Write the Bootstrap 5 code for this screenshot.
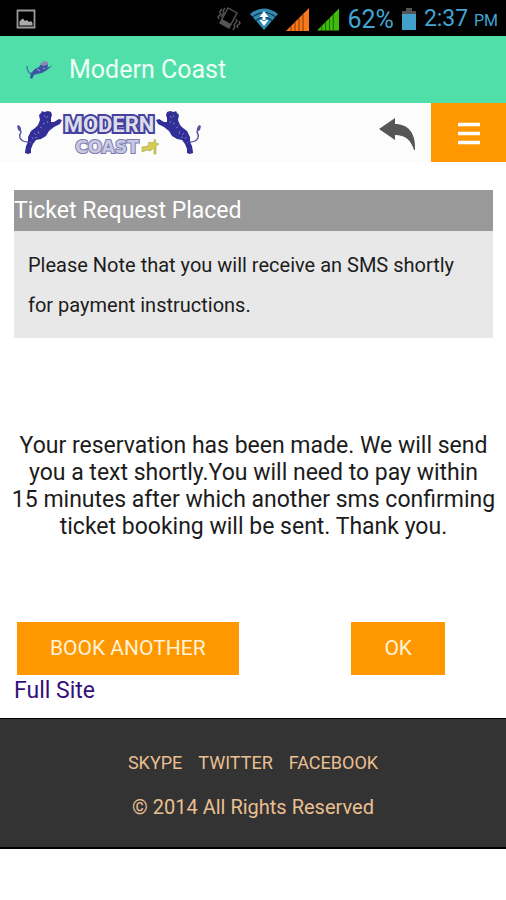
<!DOCTYPE html>
<html lang="en">
<head>
<meta charset="utf-8">
<meta name="viewport" content="width=device-width, initial-scale=1">
<title>Modern Coast</title>
<link href="https://cdn.jsdelivr.net/npm/bootstrap@5.3.0/dist/css/bootstrap.min.css" rel="stylesheet">
<style>
body { font-family: Roboto, "Liberation Sans", sans-serif; font-size: 23px; line-height: 27px; color: #1c1c1c; background: #fff; }
.status-bar { height: 36px; background: #000; color: #42a5d2; padding: 2px 8px 0 16px; }
.status-bar svg { flex: none; }
.status-level { font-size: 25px; }
.status-time { font-size: 23px; }
.status-period { font-size: 16px; }
.app-bar { height: 67px; background: #50dfa9; padding: 0 25px; gap: 14px; }
.app-title { font-size: 25px; line-height: 32px; color: #effff8; }
.site-header { height: 59px; background: #fcfcfc; }
.back-btn { padding: 0 13px; }
.menu-btn { width: 75px; background: #ff9800; }
.page-main { padding: 28px 13px 0 14px; }
.notice-title { font-size: 23px; line-height: 41px; color: #fff; background: #999; }
.notice-text { font-size: 20px; line-height: 40px; padding: 14px 14px 13px; background: #e8e8e8; }
.message { margin: 94px -8px 82px; }
.action-btn { font-size: 21px; line-height: 27px; padding: 13px 33px; background: #ff9800; color: #fff2d6; }
.action-btn:hover { background: #f08c00; color: #fff; }
.actions { padding: 0 48px 0 3px; }
.full-link { color: #35107c; line-height: 32px; }
.site-footer { margin-top: 11px; padding: 22px 0 18px; font-size: 20px; line-height: 44px; background: #333; border: solid #000; border-width: 1px 0 2px; color: #eabf91; }
.site-footer a { color: inherit; font-size: 18px; }
.logo-main { font: bold 22px Roboto, sans-serif; }
.logo-sub { font: bold 17px "DejaVu Sans", sans-serif; }
</style>
</head>
<body>
<div class="status-bar d-flex align-items-center">
  <svg class="me-auto" width="20" height="20" viewBox="0 0 20 20" aria-hidden="true"><path d="M1.5 1.5h17v17h-17z" fill="none" stroke="#999" stroke-width="1.8"/><path d="M3.5 16.5v-4l2-2 1.5-1 2 2.5 2-1 2 2 2-1 1.5 2v2.500z" fill="#aaa"/></svg>
  <svg width="26" height="26" viewBox="0 0 26 26" aria-hidden="true"><g fill="none" stroke="#555" stroke-width="1.400"><path d="M12 2l9 5-8 15-9-5z"/><path d="M6 3L3.500 6l1.500 2-3 3 1 2M9 2L7 5l1 2-3 4M20 13l1 2-3 4 1 2-2 3M23 15l1 2-3 3 1 2"/></g><path d="M4 17l9 5 2-4-9-5z" fill="#555"/></svg>
  <svg class="ms-2" width="28" height="22" viewBox="0 0 28 22" aria-hidden="true"><path d="M0 6Q14-5 28 6L14 22z" fill="#3189b4"/><path d="M2.500 9Q14 0 25.500 9M6 12.500Q14 6 22 12.500" fill="none" stroke="#083247" stroke-width="1.200"/><path d="M14 3l4.500 6h-9zM14 18l4.500-6h-9zM12.500 8h3v5h-3z" fill="#fff"/></svg>
  <svg class="ms-2" width="23" height="23" viewBox="0 0 23 23" aria-hidden="true"><path d="M0 23L23 0v23z" fill="#f7791b"/><path d="M5 18v5M9 14v9M13 10v13M17 6v17" stroke="#873800"/></svg>
  <svg class="ms-2 me-2" width="22" height="23" viewBox="0 0 23 23" aria-hidden="true"><path d="M0 23L23 0v23z" fill="#3fbd0c"/><path d="M5 18v5M9 14v9M13 10v13M17 6v17" stroke="#196000"/></svg>
  <span class="status-level">62%</span>
  <svg class="ms-2 me-2" width="14" height="22" viewBox="0 0 14 22" aria-hidden="true"><path d="M4 0h6v3h4v4H0V3h4z" fill="#555"/><path d="M0 6h14v16H0z" fill="#42a0cc"/></svg>
  <span class="status-time">2:37 <span class="status-period">PM</span></span>
</div>

<div class="app-bar d-flex align-items-center">
  <svg width="30" height="20" viewBox="0 0 30 20" aria-hidden="true"><path d="M2 6q0 6 4 8" fill="none" stroke="#3f72a9" stroke-width="1.300"/><path d="M5 18l1-5 4-4 4-2 3-4 5-1 1 4-1 2 6-3-6 5-5 3-5 1-3 1-2 4z" fill="#3b55a5"/><path d="M15 4l4-3 4 1-1 3-4 1z" fill="#8d86b8"/><path d="M12 9l3 2M18 8l2 1" stroke="#9aa7cf"/></svg>
  <span class="app-title">Modern Coast</span>
</div>

<header class="site-header d-flex align-items-stretch">
  <a href="#" class="d-flex ms-3 me-auto text-decoration-none" aria-label="Modern Coast home">
    <svg width="188" height="59" viewBox="16 103 188 59">
      <defs>
        <g id="lion">
          <path d="M28 142Q22 142 20 138Q19 135 21 132L20 129" fill="none" stroke="#5653a4" stroke-width="1.400"/>
          <path d="M17 126l2-1 2 3v4l-3-2z" fill="#5653a4"/>
          <path d="M25 152l1-6 2-4 0-5 3-6 4-3 3-3 2-5-1-5 2-2 1-2 2 1 4-1 3 1 1 3-1 3 0 4 3 0 5-3 3 1-2 4-6 3-5 4-3 5-5 3-5 1-3 4-2 5 0 4-3 1-3-1z" fill="#312e98"/>
          <path d="M34 133l2 2M38 131l1 3M35 138l2-1M44 115l1 2M48 116l-2 2M43 124l2-1M30 142l1 1M40 127l2 1M47 121l1 2M32 137l1 2" stroke="#7774bc" stroke-width="1"/>
        </g>
      </defs>
      <use href="#lion"/>
      <use href="#lion" transform="translate(218 0) scale(-1 1)"/>
      <text class="logo-main" x="109" y="132" text-anchor="middle" fill="#dcdde6" stroke="#4542a0" stroke-width="4" paint-order="stroke" stroke-linejoin="miter">MODERN</text>
      <text class="logo-sub" x="107" y="153" text-anchor="middle" fill="#c9c9e0" stroke="#7d7ab4" stroke-width="2" paint-order="stroke">COAST</text>
      <path d="M142 147l6-1 1-4 4 1 2-4 1 4 3 1-3 2 0 8-2 0 0-6-4 3-3-1-5 2z" fill="#d2cb54" stroke="#aaa641" stroke-width=".6"/>
    </svg>
  </a>
  <button type="button" class="back-btn btn border-0 rounded-0" aria-label="Back">
    <svg width="40" height="36" viewBox="0 0 40 36" aria-hidden="true"><path d="M1 14L17 3v6c13 0 21 9 20 26h-1C33 25 27 20 17 20v5z" fill="#565656"/></svg>
  </button>
  <button type="button" class="menu-btn btn border-0 rounded-0 p-0" aria-label="Menu">
    <svg width="22" height="23" viewBox="0 0 22 23" aria-hidden="true"><path d="M0 2.500h22M0 11.500h22M0 20.500h22" stroke="#fff" stroke-width="3.500"/></svg>
  </button>
</header>

<main class="page-main">
  <section>
    <h1 class="notice-title fw-normal m-0">Ticket Request Placed</h1>
    <p class="notice-text m-0">Please Note that you will receive an SMS shortly for payment instructions.</p>
  </section>
  <p class="message text-center">Your reservation has been made. We will send<br>you a text shortly.You will need to pay within<br>15 minutes after which another sms confirming<br>ticket booking will be sent. Thank you.</p>
  <div class="actions d-flex justify-content-between">
    <button type="button" class="action-btn btn border-0 rounded-0">BOOK ANOTHER</button>
    <button type="button" class="action-btn btn border-0 rounded-0">OK</button>
  </div>
  <a href="#" class="full-link d-inline-block align-top text-decoration-none">Full Site</a>
</main>

<footer class="site-footer text-center">
  <nav class="d-flex justify-content-center gap-3" aria-label="Social links">
    <a href="#" class="text-decoration-none">SKYPE</a>
    <a href="#" class="text-decoration-none">TWITTER</a>
    <a href="#" class="text-decoration-none">FACEBOOK</a>
  </nav>
  <div>© 2014 All Rights Reserved</div>
</footer>
<script src="https://cdn.jsdelivr.net/npm/bootstrap@5.3.0/dist/js/bootstrap.bundle.min.js"></script>
</body>
</html>
